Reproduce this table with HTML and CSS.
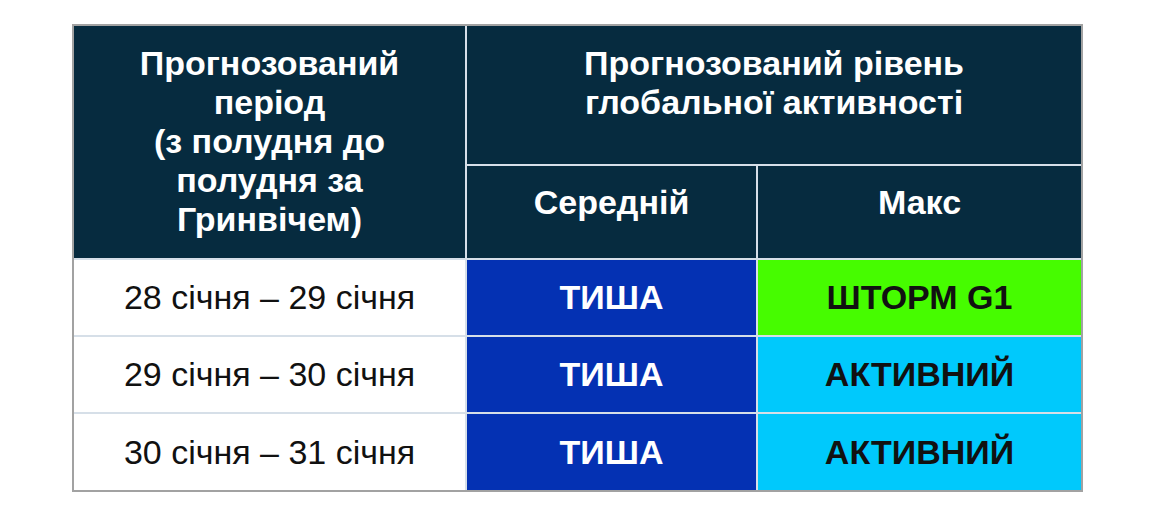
FILE: index.html
```html
<!DOCTYPE html>
<html lang="uk">
<head>
<meta charset="utf-8">
<title>Прогноз</title>
<link rel="stylesheet" href="styles.css">
</head>
<body>
<div class="page">
  <div class="table">
    <div class="cell head period">Прогнозований<br>період<br>(з полудня до<br>полудня за<br>Гринвічем)</div>
    <div class="cell head level">Прогнозований рівень<br>глобальної активності</div>
    <div class="cell head sub">Середній</div>
    <div class="cell head sub">Макс</div>

    <div class="cell date">28 січня – 29 січня</div>
    <div class="cell quiet">ТИША</div>
    <div class="cell storm">ШТОРМ G1</div>

    <div class="cell date">29 січня – 30 січня</div>
    <div class="cell quiet">ТИША</div>
    <div class="cell active">АКТИВНИЙ</div>

    <div class="cell date">30 січня – 31 січня</div>
    <div class="cell quiet">ТИША</div>
    <div class="cell active">АКТИВНИЙ</div>
  </div>
</div>
</body>
</html>
```

FILE: styles.css
```css
html, body {
  margin: 0;
  padding: 0;
  background: #ffffff;
}

.page {
  padding: 24px 0 0 72px;
}

.table {
  display: grid;
  grid-template-columns: 391px 289px 323px;
  grid-template-rows: 138px 92px 75px 75px 76px;
  gap: 2px;
  width: 1007px;
  background: #d6dfe8;
  border: 2px solid #a2a2a2;
  font-family: "Liberation Sans", Arial, sans-serif;
  font-size: 34px;
  line-height: 39px;
}

.cell {
  display: flex;
  justify-content: center;
  text-align: center;
  box-sizing: border-box;
}

.head {
  background: #062b3f;
  color: #ffffff;
  font-weight: bold;
  align-items: flex-start;
  padding-top: 18px;
}

.period {
  grid-row: 1 / span 2;
  align-items: center;
  padding-top: 0;
  padding-bottom: 2px;
}

.level {
  grid-column: 2 / span 2;
}

.sub {
  padding-top: 17px;
}

.date,
.quiet,
.storm,
.active {
  align-items: center;
}

.date {
  background: #ffffff;
  color: #111111;
}

.quiet {
  background: #0431b3;
  color: #ffffff;
  font-weight: bold;
}

.storm {
  background: #46fc00;
  color: #111111;
  font-weight: bold;
}

.active {
  background: #00c9fc;
  color: #111111;
  font-weight: bold;
}
```
